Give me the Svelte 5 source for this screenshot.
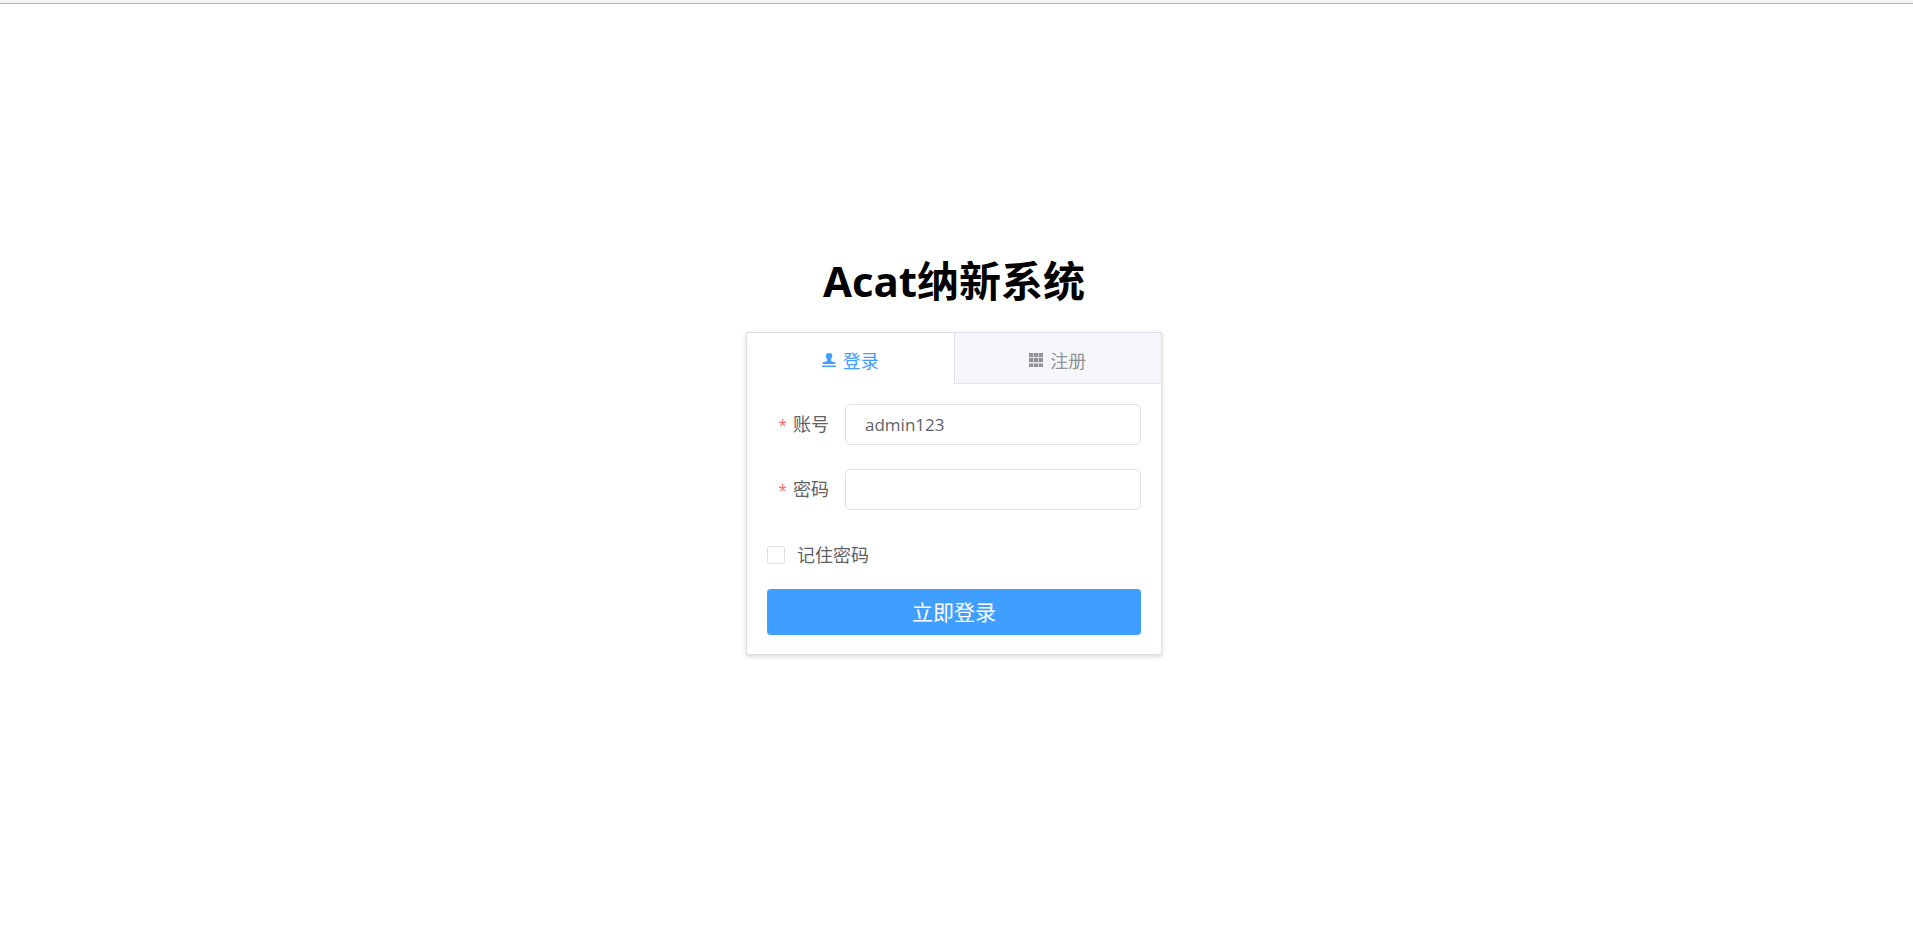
<script>
  let tab = $state('login');
  let account = $state('admin123');
  let password = $state('');
  let remember = $state(false);
</script>

<div class="topline"></div>
<main>
  <h1>Acat纳新系统</h1>
  <section class="card">
    <div class="tabs" role="tablist">
      <button type="button" role="tab" aria-selected={tab === 'login'} class:active={tab === 'login'} onclick={() => (tab = 'login')}>
        <svg viewBox="0 0 14 14" aria-hidden="true">
          <path d="M7 0a3.300 3.300 0 0 1 3.300 3.300c0 1.700-1.500 2.300-1.500 3.700 0 .9.5 1.400 1.400 1.600l1.700.4c1.100.3 1.600.9 1.700 2H.4c.1-1.100.6-1.700 1.700-2l1.700-.4c.9-.2 1.400-.7 1.400-1.600 0-1.400-1.500-2-1.500-3.700A3.300 3.300 0 0 1 7 0zM0 12.400h14V14H0z" />
        </svg>
        <span>登录</span>
      </button>
      <button type="button" role="tab" aria-selected={tab === 'register'} class:active={tab === 'register'} onclick={() => (tab = 'register')}>
        <svg viewBox="0 0 14 14" aria-hidden="true">
          <path d="M0 0h4v4H0zM4.600 0h4.800v4H4.600zM10 0h4v4h-4zM0 4.700h4v4.600H0zM4.600 4.700h4.800v4.600H4.600zM10 4.700h4v4.600h-4zM0 10.500h4V14H0zM4.600 10.500h4.800V14H4.600zM10 10.500h4V14h-4z" />
        </svg>
        <span>注册</span>
      </button>
    </div>
    <form onsubmit={(e) => e.preventDefault()}>
      <div class="field">
        <label for="account">账号</label>
        <input id="account" type="text" autocomplete="off" bind:value={account} />
      </div>
      <div class="field">
        <label for="password">密码</label>
        <input id="password" type="password" autocomplete="off" bind:value={password} />
      </div>
      <label class="remember">
        <input type="checkbox" bind:checked={remember} />
        <span>记住密码</span>
      </label>
      <button class="submit" type="submit">立即登录</button>
    </form>
  </section>
</main>

<style>
  :global(body) {
    background: #fff;
    font-family: "Open Sans", "Noto Sans CJK SC", sans-serif;
    color: #606266;
  }
  * {
    box-sizing: border-box;
  }
  .topline {
    height: 4px;
    background: #f4f4f4;
    border-bottom: 1px solid #b8b8b8;
  }
  main {
    display: flex;
    flex-direction: column;
    align-items: center;
    padding: 247px 5px 40px 0;
  }
  h1 {
    margin: 0 0 21px;
    font-size: 42px;
    line-height: 60px;
    font-weight: 700;
    color: #000;
  }
  .card {
    width: 100%;
    max-width: 416px;
    border: 1px solid #dcdfe6;
    background: #fff;
    box-shadow: 0 2px 4px rgba(0, 0, 0, 0.12), 0 0 6px rgba(0, 0, 0, 0.04);
  }
  .tabs {
    display: flex;
  }
  button,
  input {
    font: inherit;
  }
  .tabs button {
    flex: 1;
    height: 51px;
    display: flex;
    align-items: center;
    justify-content: center;
    gap: 7px;
    padding: 3px 0 0;
    border: 0;
    border-bottom: 1px solid #e4e7ed;
    background: #f5f7fa;
    color: #909399;
    font-size: 18px;
    cursor: pointer;
  }
  .tabs button.active {
    background: #fff;
    border-bottom-color: #fff;
    color: #409eff;
  }
  .tabs button + button {
    border-left: 1px solid #dcdfe6;
  }
  .tabs svg {
    width: 14px;
    height: 14px;
    fill: currentColor;
  }
  form {
    display: flex;
    flex-direction: column;
    padding: 20px 20px 19px;
  }
  .field {
    display: flex;
    align-items: flex-start;
    margin-bottom: 24px;
  }
  .field label {
    width: 78px;
    padding-right: 16px;
    text-align: right;
    font-size: 18px;
    line-height: 40px;
    white-space: nowrap;
  }
  .field label::before {
    content: "*";
    margin-right: 6px;
    color: #f56c6c;
    font-size: 16px;
  }
  .field input {
    flex: 1;
    min-width: 0;
    height: 41px;
    padding: 0 19px;
    border: 1px solid #dcdfe6;
    border-radius: 5px;
    background: #fff;
    color: #606266;
    font-size: 17px;
    outline: none;
  }
  .field input:focus {
    border-color: #409eff;
  }
  .remember {
    display: flex;
    align-items: center;
    gap: 12px;
    margin-bottom: 21px;
    padding-top: 8px;
    font-size: 18px;
    line-height: 26px;
  }
  .remember input {
    appearance: none;
    width: 18px;
    height: 18px;
    margin: 0;
    border: 1px solid #dcdfe6;
    border-radius: 2px;
    background: #fff;
  }
  .remember input:checked {
    border-color: #409eff;
    background: #409eff;
  }
  .submit {
    height: 46px;
    padding: 0;
    border: 0;
    border-radius: 4px;
    background: #409eff;
    color: #fff;
    font-size: 21px;
    line-height: 44px;
    cursor: pointer;
  }
</style>
